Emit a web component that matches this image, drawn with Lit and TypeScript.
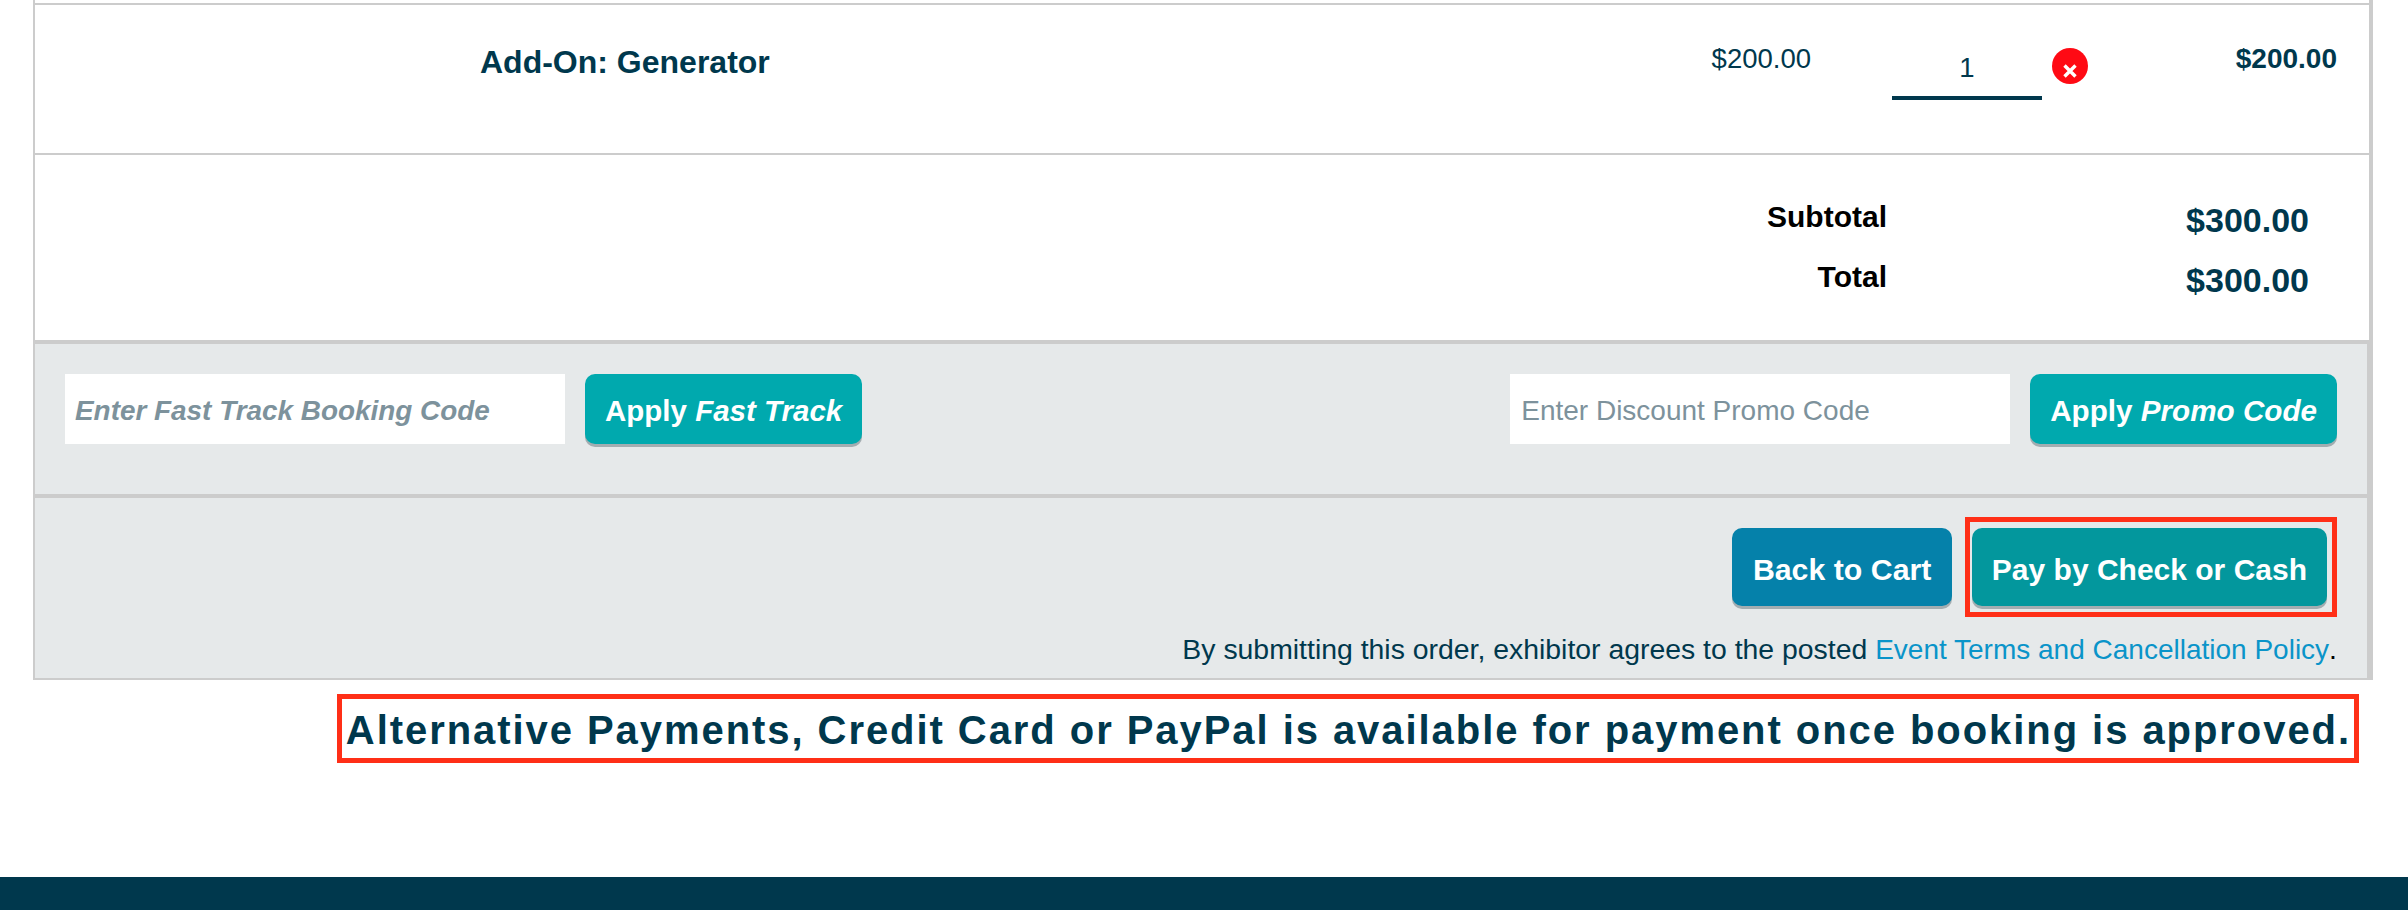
import { LitElement, html, css } from "lit";
import { customElement } from "lit/decorators.js";

@customElement("app-root")
export class AppRoot extends LitElement {
  static styles = css`
    :host { display: block; width: 2408px; height: 910px; background: #fff; overflow: hidden; position: relative;
      font-family: "Liberation Sans", Arial, sans-serif; color: #00384d; }
    * { box-sizing: border-box; }
    .page { display: flex; flex-direction: column; height: 910px; }
    .card { margin-left: 33px; width: 2340px; border-left: 2px solid #ccc; border-right: 4px solid #ccc; border-bottom: 2px solid #ccc; height: 680px; display: flex; flex-direction: column; }
    .strip { height: 3px; }
    .item { height: 150px; border-top: 2px solid #ccc; display: flex; align-items: flex-start; padding-right: 32px; }
    .name { flex: 1; padding: 37px 0 0 445px; font-size: 32px; line-height: 40px; font-weight: 700; }
    .price { font-size: 27.5px; line-height: 32px; padding-top: 38px; }
    .qty { margin: 43px 0 0 81px; width: 150px; height: 52px; border: 0; border-bottom: 4px solid #00384d; background: none; text-align: center; font: 27.5px "Liberation Sans", Arial, sans-serif; color: #00384d; padding: 0 0 8px; }
    .remove { margin: 43px 0 0 10px; width: 36px; height: 36px; border-radius: 50%; background: #ff0a14; display: flex; align-items: center; justify-content: center; padding-top: 9px; }
    .total { width: 249px; text-align: right; font-size: 28px; line-height: 32px; font-weight: 700; padding-top: 38px; }
    .totals { height: 187px; border-top: 2px solid #ccc; padding: 45px 60px 0 0; display: grid; grid-template-columns: 1fr 422px; grid-auto-rows: 60px; justify-items: end; }
    .totals .lbl { font-size: 30px; line-height: 34px; font-weight: 700; color: #000; }
    .totals .val { font-size: 34px; line-height: 40px; font-weight: 700; }
    .promo { height: 154px; background: #e6e9ea; border-top: 4px solid #ccc; border-right: 2px solid #ccc; display: flex; align-items: flex-start; padding: 30px 30px 0 30px; }
    .promo input { width: 500px; height: 70px; border: 0; background: #fff; padding: 3px 0 0 11px; font: 28px "Liberation Sans", Arial, sans-serif; color: #00384d; outline: none; }
    .promo input::placeholder { color: #7d929c; opacity: 1; }
    .promo input.fast { font-style: italic; font-weight: 700; font-size: 27.9px; padding-left: 10px; }
    .btn { height: 78px; border: 0; border-radius: 10px; box-shadow: 0 3px 0 #a3adb1; color: #fff; font: 700 30px "Liberation Sans", Arial, sans-serif; padding: 6px 20px 0; white-space: nowrap; }
    .apply { background: #00a9ae; margin-left: 20px; height: 70px; font-size: 29.5px; padding-top: 3px; }
    .apply.wide { font-size: 29.65px; }
    .spacer { flex: 1; }
    .actions { flex: 1; background: #e6e9ea; border-top: 4px solid #ccc; border-right: 2px solid #ccc; padding: 19px 30px 0 0; display: flex; flex-direction: column; align-items: flex-end; }
    .row { display: flex; align-items: flex-start; }
    .back { background: #0581aa; margin-top: 11px; margin-right: 13px; padding: 6px 20.5px 0; font-size: 30.3px; }
    .hl { border: 5px solid #ff2f17; padding: 6px 5px 6px 2px; }
    .pay { background: #03979d; display: block; }
    .terms { font-size: 28.4px; line-height: 32px; margin-top: 16px; white-space: nowrap; }
    .terms a { color: #0a94c9; text-decoration: none; font-size: 28px; }
    .terms span { color: #000; }
    .note { align-self: flex-end; margin: 14px 49px 0 0; height: 69px; border: 5px solid #ff2f17; display: flex; align-items: center; padding: 3px 3px 0 4px; font-size: 40px; font-weight: 700; letter-spacing: 1.94px; white-space: nowrap; }
    .foot { margin-top: auto; height: 33px; background: #00384d; }
  `;

  render() {
    return html`
      <div class="page">
        <div class="card">
          <div class="strip"></div>
          <div class="item">
            <div class="name">Add-On: Generator</div>
            <div class="price">$200.00</div>
            <input class="qty" value="1" />
            <div class="remove">
              <svg width="16" height="16" viewBox="0 0 16 16"><path d="M2.5 2.5L13.5 13.5M13.5 2.5L2.5 13.5" stroke="#fff" stroke-width="3.4" /></svg>
            </div>
            <div class="total">$200.00</div>
          </div>
          <div class="totals">
            <div class="lbl">Subtotal</div><div class="val">$300.00</div>
            <div class="lbl">Total</div><div class="val">$300.00</div>
          </div>
          <div class="promo">
            <input class="fast" placeholder="Enter Fast Track Booking Code" />
            <button class="btn apply">Apply <i>Fast Track</i></button>
            <div class="spacer"></div>
            <input placeholder="Enter Discount Promo Code" />
            <button class="btn apply wide">Apply <i>Promo Code</i></button>
          </div>
          <div class="actions">
            <div class="row">
              <button class="btn back">Back to Cart</button>
              <div class="hl"><button class="btn pay">Pay by Check or Cash</button></div>
            </div>
            <div class="terms">By submitting this order, exhibitor agrees to the posted <a href="#">Event Terms and Cancellation Policy</a><span>.</span></div>
          </div>
        </div>
        <div class="note">Alternative Payments, Credit Card or PayPal is available for payment once booking is approved.</div>
        <div class="foot"></div>
      </div>
    `;
  }
}
